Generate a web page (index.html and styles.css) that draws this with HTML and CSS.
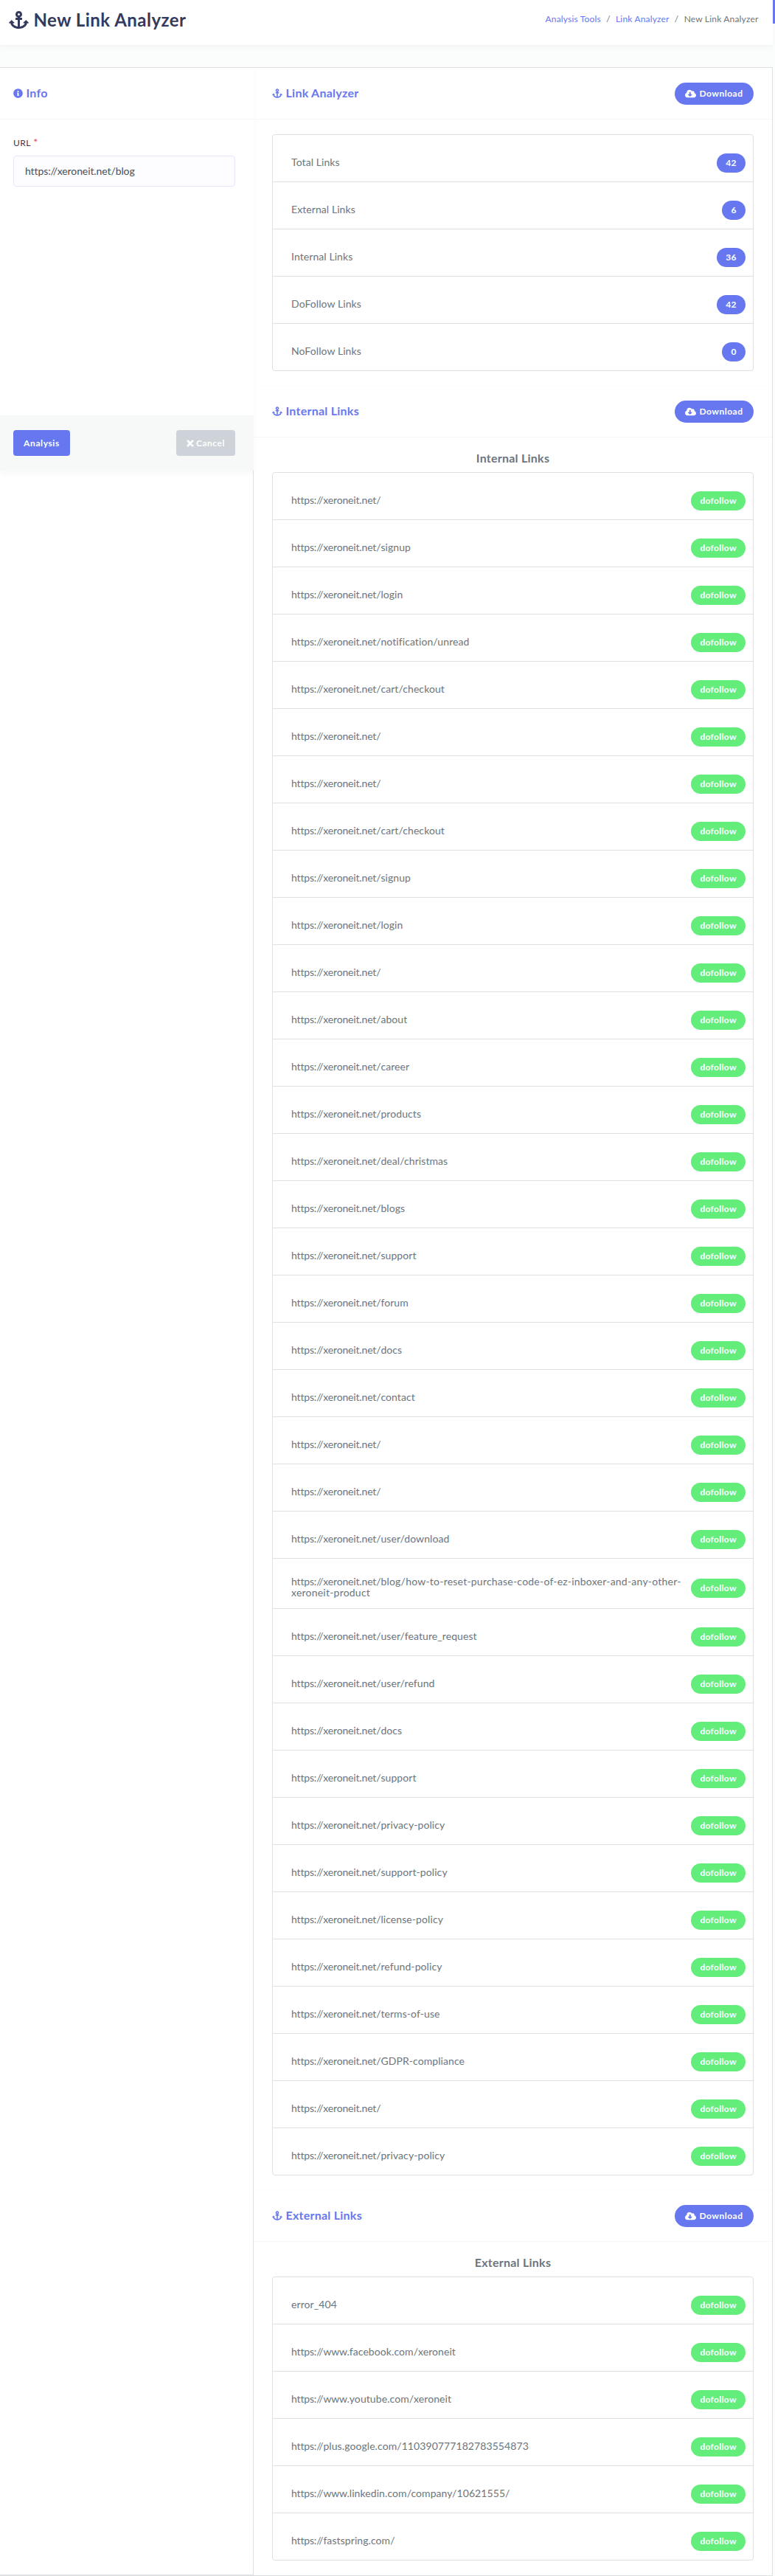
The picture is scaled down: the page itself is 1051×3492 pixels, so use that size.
FILE: index.html
```
<!DOCTYPE html>
<html lang="en">
<head>
<meta charset="utf-8">
<title>New Link Analyzer</title>
<link rel="stylesheet" href="styles.css">
</head>
<body>
<svg width="0" height="0" class="sprite" aria-hidden="true">
  <symbol id="anchor" viewBox="0 0 576 512"><path d="M12.971 352h32.394C67.172 454.735 181.944 512 288 512c106.229 0 220.853-57.38 242.635-160h32.394c10.691 0 16.045-12.926 8.485-20.485l-67.029-67.029c-4.686-4.686-12.284-4.686-16.971 0l-67.029 67.029c-7.56 7.56-2.206 20.485 8.485 20.485h35.146c-20.29 54.317-84.963 86.588-144.117 94.015V256h52c6.627 0 12-5.373 12-12v-40c0-6.627-5.373-12-12-12h-52v-5.47c37.281-13.226 63.995-48.797 64-90.518C384.005 43.772 341.605.738 289.37.01 235.723-.739 192 42.525 192 96c0 41.798 26.746 77.434 64 90.668V192h-52c-6.627 0-12 5.373-12 12v40c0 6.627 5.373 12 12 12h52v190.015c-58.936-7.399-123.82-39.679-144.117-94.015h35.146c10.691 0 16.045-12.926 8.485-20.485l-67.029-67.029c-4.686-4.686-12.284-4.686-16.971 0L4.485 331.515C-3.074 339.074 2.28 352 12.971 352zM288 64c17.645 0 32 14.355 32 32s-14.355 32-32 32-32-14.355-32-32 14.355-32 32-32z"/></symbol>
  <symbol id="cloud" viewBox="0 0 640 512"><path d="M537.6 226.6c4.1-10.7 6.4-22.4 6.4-34.6 0-53-43-96-96-96-19.7 0-38.1 6-53.3 16.2C367 64.2 315.3 32 256 32c-88.4 0-160 71.6-160 160 0 2.7.1 5.4.2 8.1C40.2 219.8 0 273.2 0 336c0 79.5 64.5 144 144 144h368c70.7 0 128-57.3 128-128 0-61.9-44-113.6-102.4-125.4zm-132.9 88.7L299.3 420.7c-6.2 6.2-16.4 6.2-22.6 0L171.3 315.3c-10.1-10.1-2.9-27.3 11.3-27.3H248V176c0-8.8 7.2-16 16-16h48c8.8 0 16 7.2 16 16v112h65.4c14.2 0 21.4 17.2 11.3 27.3z"/></symbol>
  <symbol id="info" viewBox="0 0 512 512"><path d="M256 8C119.043 8 8 119.083 8 256c0 136.997 111.043 248 248 248s248-111.003 248-248C504 119.083 392.957 8 256 8zm0 110c23.196 0 42 18.804 42 42s-18.804 42-42 42-42-18.804-42-42 18.804-42 42-42zm56 254c0 6.627-5.373 12-12 12h-88c-6.627 0-12-5.373-12-12v-24c0-6.627 5.373-12 12-12h12v-64h-12c-6.627 0-12-5.373-12-12v-24c0-6.627 5.373-12 12-12h64c6.627 0 12 5.373 12 12v100h12c6.627 0 12 5.373 12 12v24z"/></symbol>
  <symbol id="times" viewBox="0 0 10 10"><path d="M1.8 1.8 8.2 8.2M8.2 1.8 1.8 8.2" fill="none" stroke="currentColor" stroke-width="2.7" stroke-linecap="round"/></symbol>
</svg>
<div class="scroll-thumb"></div>
<header class="page-header">
  <h1><svg class="icon"><use href="#anchor"/></svg>New Link Analyzer</h1>
  <nav class="breadcrumb"><a>Analysis Tools</a><span class="sep">/</span><a>Link Analyzer</a><span class="sep">/</span><span>New Link Analyzer</span></nav>
</header>
<main class="columns">
  <aside class="left">
    <div class="card">
      <div class="card-header"><h4><svg class="icon info"><use href="#info"/></svg>Info</h4></div>
      <div class="card-body">
        <label for="url">URL <b>*</b></label>
        <input id="url" type="text" value="https://xeroneit.net/blog">
      </div>
      <div class="card-footer"><button class="btn primary">Analysis</button><button class="btn cancel"><svg class="icon"><use href="#times"/></svg>Cancel</button></div>
    </div>
  </aside>
  <div class="right">
    <section>
      <div class="card-header"><h4><svg class="icon"><use href="#anchor"/></svg>Link Analyzer</h4><button class="download"><svg class="icon"><use href="#cloud"/></svg>Download</button></div>
      <ul class="list summary">
        <li><p>Total Links</p><span class="badge">42</span></li>
        <li><p>External Links</p><span class="badge">6</span></li>
        <li><p>Internal Links</p><span class="badge">36</span></li>
        <li><p>DoFollow Links</p><span class="badge">42</span></li>
        <li><p>NoFollow Links</p><span class="badge">0</span></li>
      </ul>
    </section>
    <section>
      <div class="card-header"><h4><svg class="icon"><use href="#anchor"/></svg>Internal Links</h4><button class="download"><svg class="icon"><use href="#cloud"/></svg>Download</button></div>
      <h6>Internal Links</h6>
      <ul class="list">
        <li><p><span class="host">https://xeroneit.net/</span></p><span class="badge ok">dofollow</span></li>
        <li><p><span class="host">https://xeroneit.net/</span>signup</p><span class="badge ok">dofollow</span></li>
        <li><p><span class="host">https://xeroneit.net/</span>login</p><span class="badge ok">dofollow</span></li>
        <li><p><span class="host">https://xeroneit.net/</span>notification/unread</p><span class="badge ok">dofollow</span></li>
        <li><p><span class="host">https://xeroneit.net/</span>cart/checkout</p><span class="badge ok">dofollow</span></li>
        <li><p><span class="host">https://xeroneit.net/</span></p><span class="badge ok">dofollow</span></li>
        <li><p><span class="host">https://xeroneit.net/</span></p><span class="badge ok">dofollow</span></li>
        <li><p><span class="host">https://xeroneit.net/</span>cart/checkout</p><span class="badge ok">dofollow</span></li>
        <li><p><span class="host">https://xeroneit.net/</span>signup</p><span class="badge ok">dofollow</span></li>
        <li><p><span class="host">https://xeroneit.net/</span>login</p><span class="badge ok">dofollow</span></li>
        <li><p><span class="host">https://xeroneit.net/</span></p><span class="badge ok">dofollow</span></li>
        <li><p><span class="host">https://xeroneit.net/</span>about</p><span class="badge ok">dofollow</span></li>
        <li><p><span class="host">https://xeroneit.net/</span>career</p><span class="badge ok">dofollow</span></li>
        <li><p><span class="host">https://xeroneit.net/</span>products</p><span class="badge ok">dofollow</span></li>
        <li><p><span class="host">https://xeroneit.net/</span>deal/christmas</p><span class="badge ok">dofollow</span></li>
        <li><p><span class="host">https://xeroneit.net/</span>blogs</p><span class="badge ok">dofollow</span></li>
        <li><p><span class="host">https://xeroneit.net/</span>support</p><span class="badge ok">dofollow</span></li>
        <li><p><span class="host">https://xeroneit.net/</span>forum</p><span class="badge ok">dofollow</span></li>
        <li><p><span class="host">https://xeroneit.net/</span>docs</p><span class="badge ok">dofollow</span></li>
        <li><p><span class="host">https://xeroneit.net/</span>contact</p><span class="badge ok">dofollow</span></li>
        <li><p><span class="host">https://xeroneit.net/</span></p><span class="badge ok">dofollow</span></li>
        <li><p><span class="host">https://xeroneit.net/</span></p><span class="badge ok">dofollow</span></li>
        <li><p><span class="host">https://xeroneit.net/</span>user/download</p><span class="badge ok">dofollow</span></li>
        <li><p class="long"><span class="host">https://xeroneit.net/</span>blog/how-to-reset-purchase-code-of-ez-inboxer-and-any-other-<br>xeroneit-product</p><span class="badge ok">dofollow</span></li>
        <li><p><span class="host">https://xeroneit.net/</span>user/feature_request</p><span class="badge ok">dofollow</span></li>
        <li><p><span class="host">https://xeroneit.net/</span>user/refund</p><span class="badge ok">dofollow</span></li>
        <li><p><span class="host">https://xeroneit.net/</span>docs</p><span class="badge ok">dofollow</span></li>
        <li><p><span class="host">https://xeroneit.net/</span>support</p><span class="badge ok">dofollow</span></li>
        <li><p><span class="host">https://xeroneit.net/</span>privacy-policy</p><span class="badge ok">dofollow</span></li>
        <li><p><span class="host">https://xeroneit.net/</span>support-policy</p><span class="badge ok">dofollow</span></li>
        <li><p><span class="host">https://xeroneit.net/</span>license-policy</p><span class="badge ok">dofollow</span></li>
        <li><p><span class="host">https://xeroneit.net/</span>refund-policy</p><span class="badge ok">dofollow</span></li>
        <li><p><span class="host">https://xeroneit.net/</span>terms-of-use</p><span class="badge ok">dofollow</span></li>
        <li><p><span class="host">https://xeroneit.net/</span>GDPR-compliance</p><span class="badge ok">dofollow</span></li>
        <li><p><span class="host">https://xeroneit.net/</span></p><span class="badge ok">dofollow</span></li>
        <li><p><span class="host">https://xeroneit.net/</span>privacy-policy</p><span class="badge ok">dofollow</span></li>
      </ul>
    </section>
    <section>
      <div class="card-header"><h4><svg class="icon"><use href="#anchor"/></svg>External Links</h4><button class="download"><svg class="icon"><use href="#cloud"/></svg>Download</button></div>
      <h6>External Links</h6>
      <ul class="list">
        <li><p>error_404</p><span class="badge ok">dofollow</span></li>
        <li><p><span class="host">https://www.</span>facebook.com/xeroneit</p><span class="badge ok">dofollow</span></li>
        <li><p><span class="host">https://www.</span>youtube.com/xeroneit</p><span class="badge ok">dofollow</span></li>
        <li><p><span class="host">https://</span>plus.google.com/110390777182783554873</p><span class="badge ok">dofollow</span></li>
        <li><p><span class="host">https://www.</span>linkedin.com/company/10621555/</p><span class="badge ok">dofollow</span></li>
        <li><p><span class="host">https://</span>fastspring.com/</p><span class="badge ok">dofollow</span></li>
      </ul>
    </section>
  </div>
</main>
</body>
</html>
```
FILE: styles.css
```
* { box-sizing: border-box; }
body {
  margin: 0;
  background: #fbfdfc;
  color: #6c757d;
  font: 14px/15px Lato, "Open Sans", sans-serif;
}
h1, h4, h6, p, ul { margin: 0; padding: 0; }
button, input { font-family: inherit; }
.sprite { position: absolute; }
.icon { fill: currentColor; flex: none; }
.scroll-thumb {
  position: absolute;
  top: 0;
  right: 0;
  width: 3px;
  height: 32px;
  background: #6777ef;
}

.page-header {
  display: flex;
  justify-content: space-between;
  height: 61px;
  margin-right: 3px;
  padding: 0 19.5px 0 12px;
  background: #fff;
  border-radius: 3px;
  box-shadow: 0 4px 8px rgba(0, 0, 0, .03);
}
h1 {
  display: flex;
  align-items: center;
  gap: 6.5px;
  height: 53px;
  color: #34395e;
  font-size: 24px;
  line-height: 28px;
  letter-spacing: .48px;
}
h1 .icon { width: 27px; height: 24px; }
.breadcrumb {
  display: flex;
  align-items: center;
  height: 51px;
  font-size: 12px;
  letter-spacing: .18px;
}
.breadcrumb a { color: #6777ef; }
.breadcrumb .sep { width: 20px; text-align: center; }

.columns {
  display: flex;
  height: 3401px;
  margin: 30px 3px 0 0;
  background: #fff;
  border: solid #dee0e2;
  border-width: 1px 1px 1px 0;
}
.left {
  width: 344px;
  border-right: 1px solid #dee0e2;
  border-bottom: 1px solid #dee2e6;
}
.card {
  display: flex;
  flex-direction: column;
  width: 344px;
  height: 546px;
  background: #fff;
  box-shadow: 0 4px 8px rgba(0, 0, 0, .03);
}
.card-header {
  display: flex;
  align-items: center;
  justify-content: space-between;
  height: 70px;
  padding: 0 25px;
  border-bottom: 1px solid #f7f7f7;
}
.left .card-header { padding: 0 18px; }
h4 {
  display: flex;
  align-items: center;
  gap: 4.5px;
  padding-bottom: 2px;
  color: #6777ef;
  font-size: 16px;
  line-height: 28px;
  letter-spacing: .25px;
}
h4 .icon { width: 14px; height: 13px; margin-top: 1px; }
h4 .info { width: 13px; }
.card-body { flex: 1; padding: 23px 25px 0 18px; }
label {
  display: block;
  margin-bottom: 9px;
  color: #34395e;
  font-size: 12px;
  line-height: 16px;
  letter-spacing: .5px;
}
label b { color: #e83e5c; font-size: 14px; font-weight: 400; }
input {
  display: block;
  width: 301px;
  height: 42px;
  padding: 0 15px 2px;
  background: #fdfdff;
  border: 1px solid #e4e6fc;
  border-radius: 4px;
  color: #495057;
  font-size: 14px;
  letter-spacing: -.1px;
}
.card-footer {
  display: flex;
  justify-content: space-between;
  height: 75px;
  padding: 20px 25px 20px 18px;
  background: #f7f9f8;
}
.btn, .download {
  display: flex;
  align-items: center;
  justify-content: center;
  padding: 0;
  border: 0;
  background: #6777ef;
  color: #fff;
  font-size: 12px;
  font-weight: 700;
}
.btn { height: 35px; border-radius: 4px; letter-spacing: .6px; }
.primary { width: 77px; }
.cancel { width: 80px; gap: 3px; background: #cdd3d8; letter-spacing: .5px; }
.cancel .icon { width: 10px; height: 10px; }
.download {
  gap: 4px;
  width: 107px;
  height: 30px;
  border-radius: 15px;
  letter-spacing: .5px;
}
.download .icon { width: 15px; height: 12px; }

.right { flex: 1; }
section + section .card-header { height: 71px; border-top: 1px solid #fcfcfc; }
.list {
  margin: 0 25px 19px;
  list-style: none;
  border: 1px solid #dee0e2;
  border-radius: 4px;
}
.summary { margin-top: 20px; }
.list li {
  display: flex;
  align-items: center;
  justify-content: space-between;
  min-height: 64px;
  padding: 25px 10px 12px 25px;
  border-bottom: 1px solid #dee0e2;
}
.list li:last-child { min-height: 63px; border-bottom: 0; }
.list p { margin: -2px 0 2px; letter-spacing: .08px; white-space: nowrap; }
.list .long { letter-spacing: .22px; }
.list .host { letter-spacing: -.16px; }
.badge {
  padding: 0 12.2px;
  background: #6777ef;
  border-radius: 13px;
  color: #fff;
  font-size: 12px;
  font-weight: 700;
  line-height: 26px;
  letter-spacing: .3px;
}
.ok { background: #63ed7a; }
h6 {
  padding: 14px 0 6px;
  font-size: 16px;
  line-height: 27px;
  letter-spacing: .25px;
  text-align: center;
}
```
